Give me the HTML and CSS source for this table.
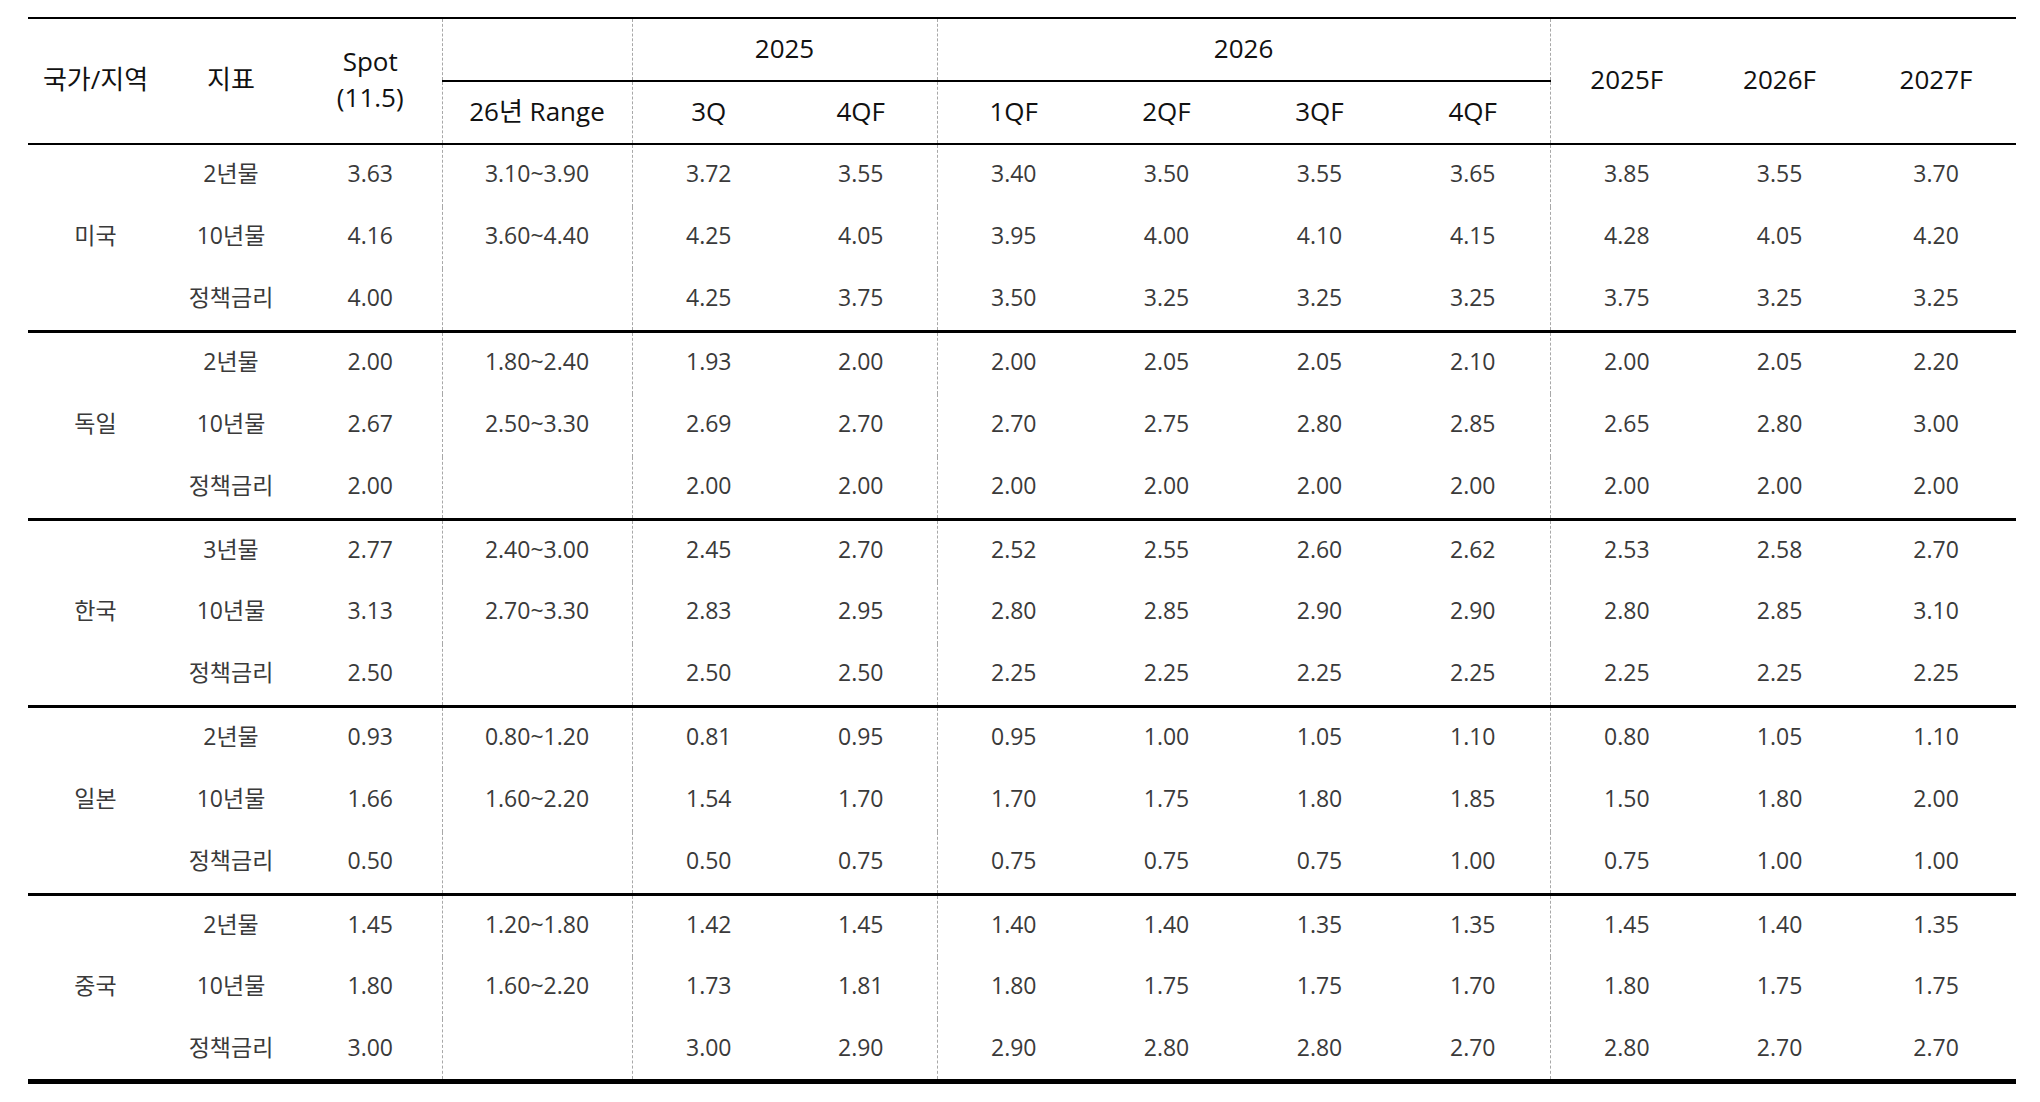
FILE: index.html
```html
<!DOCTYPE html>
<html lang="ko">
<head>
<meta charset="utf-8">
<title>금리 전망</title>
<link rel="stylesheet" href="styles.css">
</head>
<body>
<table class="tbl">
  <colgroup>
    <col class="c-country">
    <col class="c-ind">
    <col class="c-spot">
    <col class="c-range dl">
    <col class="c-q dl">
    <col class="c-q2">
    <col class="c-q dl">
    <col class="c-q">
    <col class="c-q">
    <col class="c-q4">
    <col class="c-y dl">
    <col class="c-y">
    <col class="c-ylast">
  </colgroup>
  <thead>
    <tr class="h1">
      <th rowspan="2">국가/지역</th>
      <th rowspan="2">지표</th>
      <th rowspan="2" class="spot">Spot<br>(11.5)</th>
      <th class="mid"></th>
      <th colspan="2" class="mid">2025</th>
      <th colspan="4" class="mid">2026</th>
      <th rowspan="2">2025F</th>
      <th rowspan="2">2026F</th>
      <th rowspan="2">2027F</th>
    </tr>
    <tr class="h2">
      <th>26년 Range</th>
      <th>3Q</th>
      <th>4QF</th>
      <th>1QF</th>
      <th>2QF</th>
      <th>3QF</th>
      <th>4QF</th>
    </tr>
  </thead>
  <tbody>
    <tr class="grp first"><td rowspan="3" class="cty">미국</td><td>2년물</td><td>3.63</td><td>3.10~3.90</td><td>3.72</td><td>3.55</td><td>3.40</td><td>3.50</td><td>3.55</td><td>3.65</td><td>3.85</td><td>3.55</td><td>3.70</td></tr>
    <tr><td>10년물</td><td>4.16</td><td>3.60~4.40</td><td>4.25</td><td>4.05</td><td>3.95</td><td>4.00</td><td>4.10</td><td>4.15</td><td>4.28</td><td>4.05</td><td>4.20</td></tr>
    <tr><td>정책금리</td><td>4.00</td><td></td><td>4.25</td><td>3.75</td><td>3.50</td><td>3.25</td><td>3.25</td><td>3.25</td><td>3.75</td><td>3.25</td><td>3.25</td></tr>

    <tr class="grp"><td rowspan="3" class="cty">독일</td><td>2년물</td><td>2.00</td><td>1.80~2.40</td><td>1.93</td><td>2.00</td><td>2.00</td><td>2.05</td><td>2.05</td><td>2.10</td><td>2.00</td><td>2.05</td><td>2.20</td></tr>
    <tr><td>10년물</td><td>2.67</td><td>2.50~3.30</td><td>2.69</td><td>2.70</td><td>2.70</td><td>2.75</td><td>2.80</td><td>2.85</td><td>2.65</td><td>2.80</td><td>3.00</td></tr>
    <tr><td>정책금리</td><td>2.00</td><td></td><td>2.00</td><td>2.00</td><td>2.00</td><td>2.00</td><td>2.00</td><td>2.00</td><td>2.00</td><td>2.00</td><td>2.00</td></tr>

    <tr class="grp"><td rowspan="3" class="cty">한국</td><td>3년물</td><td>2.77</td><td>2.40~3.00</td><td>2.45</td><td>2.70</td><td>2.52</td><td>2.55</td><td>2.60</td><td>2.62</td><td>2.53</td><td>2.58</td><td>2.70</td></tr>
    <tr><td>10년물</td><td>3.13</td><td>2.70~3.30</td><td>2.83</td><td>2.95</td><td>2.80</td><td>2.85</td><td>2.90</td><td>2.90</td><td>2.80</td><td>2.85</td><td>3.10</td></tr>
    <tr><td>정책금리</td><td>2.50</td><td></td><td>2.50</td><td>2.50</td><td>2.25</td><td>2.25</td><td>2.25</td><td>2.25</td><td>2.25</td><td>2.25</td><td>2.25</td></tr>

    <tr class="grp"><td rowspan="3" class="cty">일본</td><td>2년물</td><td>0.93</td><td>0.80~1.20</td><td>0.81</td><td>0.95</td><td>0.95</td><td>1.00</td><td>1.05</td><td>1.10</td><td>0.80</td><td>1.05</td><td>1.10</td></tr>
    <tr><td>10년물</td><td>1.66</td><td>1.60~2.20</td><td>1.54</td><td>1.70</td><td>1.70</td><td>1.75</td><td>1.80</td><td>1.85</td><td>1.50</td><td>1.80</td><td>2.00</td></tr>
    <tr><td>정책금리</td><td>0.50</td><td></td><td>0.50</td><td>0.75</td><td>0.75</td><td>0.75</td><td>0.75</td><td>1.00</td><td>0.75</td><td>1.00</td><td>1.00</td></tr>

    <tr class="grp"><td rowspan="3" class="cty">중국</td><td>2년물</td><td>1.45</td><td>1.20~1.80</td><td>1.42</td><td>1.45</td><td>1.40</td><td>1.40</td><td>1.35</td><td>1.35</td><td>1.45</td><td>1.40</td><td>1.35</td></tr>
    <tr><td>10년물</td><td>1.80</td><td>1.60~2.20</td><td>1.73</td><td>1.81</td><td>1.80</td><td>1.75</td><td>1.75</td><td>1.70</td><td>1.80</td><td>1.75</td><td>1.75</td></tr>
    <tr class="last"><td>정책금리</td><td>3.00</td><td></td><td>3.00</td><td>2.90</td><td>2.90</td><td>2.80</td><td>2.80</td><td>2.70</td><td>2.80</td><td>2.70</td><td>2.70</td></tr>
  </tbody>
</table>
</body>
</html>
```

FILE: styles.css
```css
html, body {
  margin: 0;
  padding: 0;
  background: #ffffff;
}

body {
  font-family: "Open Sans", "Noto Sans CJK KR", sans-serif;
}

.tbl {
  margin: 17px 0 0 28px;
  width: 1988px;
  table-layout: fixed;
  border-collapse: collapse;
  border-top: 2px solid #000;
  border-bottom: 5px solid #000;
}

.c-country { width: 135px; }
.c-ind { width: 136px; }
.c-spot { width: 143px; }
.c-range { width: 190px; }
.c-q { width: 153px; }
.c-q2 { width: 152px; }
.c-q4 { width: 154px; }
.c-y { width: 153px; }
.c-ylast { width: 160px; }

.dl {
  border-left: 1px dashed #a8a8a8;
}

.tbl th {
  font-weight: 400;
  font-size: 26px;
  color: #111;
  text-align: center;
  vertical-align: middle;
  padding: 0 0 4px 0;
  line-height: 36px;
}

.tbl thead tr {
  height: 63px;
}

.tbl thead tr.h2 th,
.tbl thead tr.h1 th[rowspan] {
  border-bottom: 2px solid #000;
}

.tbl th.mid {
  border-bottom: 2px solid #000;
}

.tbl td {
  font-size: 23px;
  font-weight: 400;
  color: #3a3a3a;
  text-align: center;
  vertical-align: middle;
  padding: 0 0 5px 0;
  line-height: 30px;
}

.tbl tbody tr {
  height: 62.5px;
}

.tbl tbody tr.grp td {
  border-top: 3px solid #000;
}

.tbl tbody tr.grp.first td {
  border-top: 2px solid #000;
}
```
